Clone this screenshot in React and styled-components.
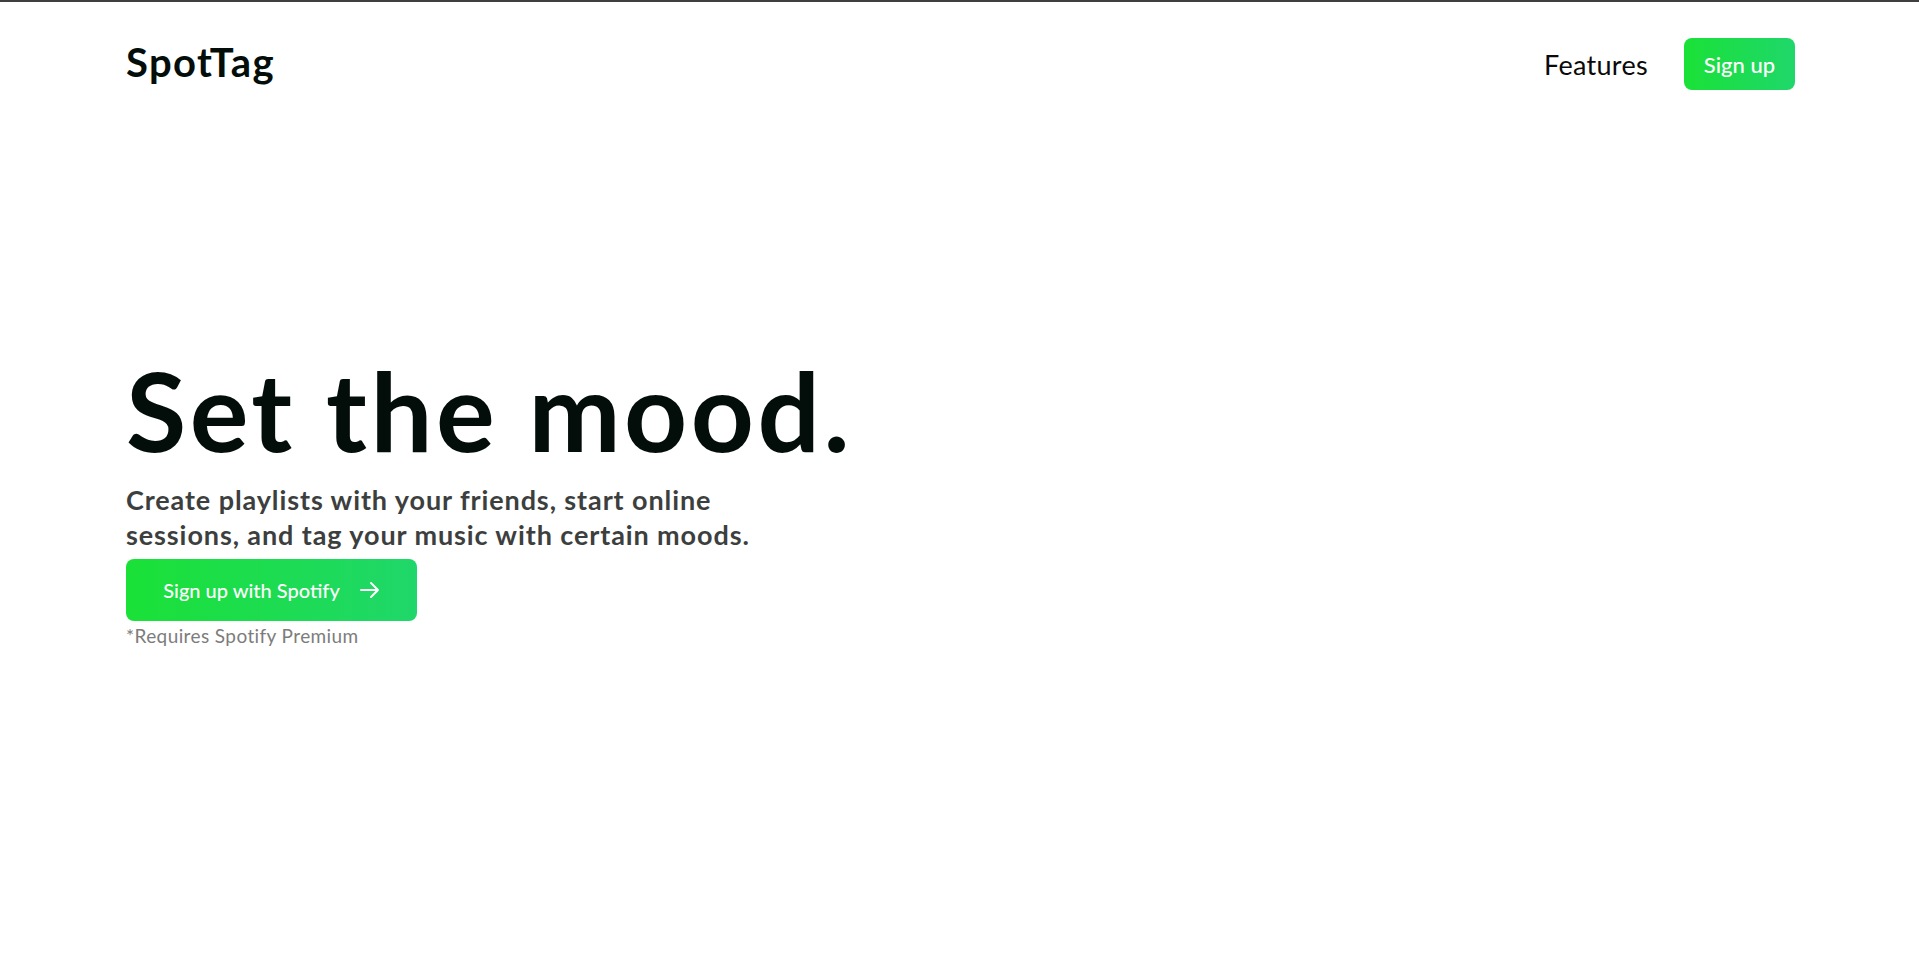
import React from 'react'
import styled, { createGlobalStyle } from 'styled-components'

const GlobalStyle = createGlobalStyle`
    html, body {
        margin: 0;
        padding: 0;
        background: #ffffff;
        font-family: "Lato", "Open Sans", sans-serif;
    }
    * {
        box-sizing: border-box;
    }
`

const Page = styled.div`
    min-height: 100vh;
    border-top: 2px solid #3f3f42;
    padding: 0 124px 0 126px;
`

const Header = styled.header`
    display: flex;
    align-items: center;
    justify-content: space-between;
    height: 126px;
    padding-bottom: 2px;
`

const Logo = styled.div`
    font-size: 40px;
    font-weight: 700;
    color: #030d0a;
    letter-spacing: 1.4px;
    margin-top: -4px;
`

const Nav = styled.nav`
    display: flex;
    align-items: center;
    gap: 36px;
`

const NavLink = styled.a`
    font-size: 27px;
    color: #0a0a0a;
    text-decoration: none;
    letter-spacing: 0.3px;
    cursor: pointer;
`

const GreenButton = styled.button`
    display: flex;
    align-items: center;
    justify-content: center;
    gap: 20px;
    border: none;
    border-radius: 8px;
    background: linear-gradient(90deg, #1ae137 0%, #1fd76a 100%);
    color: #ffffff;
    font-family: inherit;
    cursor: pointer;
    height: ${(p) => (p.$large ? '62px' : '52px')};
    width: ${(p) => (p.$large ? '291px' : '111px')};
    font-size: ${(p) => (p.$large ? '20px' : '22px')};
    font-weight: 500;
`

const Hero = styled.section`
    display: flex;
    flex-direction: column;
    align-items: flex-start;
    padding-top: 226px;
`

const Title = styled.h1`
    margin: 0;
    font-size: 110px;
    font-weight: 700;
    line-height: 1;
    color: #030d0a;
    letter-spacing: 3.5px;
`

const Lead = styled.p`
    margin: 18px 0 7px;
    max-width: 660px;
    font-size: 27px;
    line-height: 35px;
    font-weight: 700;
    letter-spacing: 0.9px;
    color: #3d3f3f;
`

const Note = styled.span`
    margin-top: 3px;
    font-size: 19px;
    letter-spacing: 0.4px;
    color: #7c7c7c;
`

const Arrow = () => (
    <svg width="20" height="18" viewBox="0 0 20 18" fill="none" stroke="#ffffff" strokeWidth="2" strokeLinecap="round" strokeLinejoin="round">
        <path d="M1 9h17M11 2l7 7-7 7" />
    </svg>
)

export default function App() {
    return (
        <>
            <GlobalStyle />
            <Page>
                <Header>
                    <Logo>SpotTag</Logo>
                    <Nav>
                        <NavLink>Features</NavLink>
                        <GreenButton>Sign up</GreenButton>
                    </Nav>
                </Header>
                <Hero>
                    <Title>Set the mood.</Title>
                    <Lead>Create playlists with your friends, start online sessions, and tag your music with certain moods.</Lead>
                    <GreenButton $large>
                        Sign up with Spotify
                        <Arrow />
                    </GreenButton>
                    <Note>*Requires Spotify Premium</Note>
                </Hero>
            </Page>
        </>
    )
}
